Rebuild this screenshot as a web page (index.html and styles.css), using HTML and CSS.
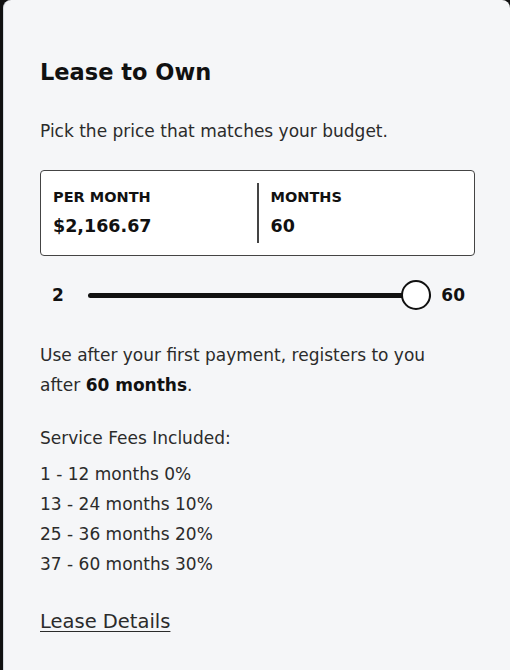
FILE: index.html
```html
<!DOCTYPE html>
<html lang="en">
<head>
  <meta charset="UTF-8" />
  <meta name="viewport" content="width=device-width, initial-scale=1.0"/>
  <title>Lease to Own</title>
  <link rel="stylesheet" href="styles.css">
</head>
<body>
  <section class="lease-card">
    <h2 class="lease-title">Lease to Own</h2>
    <p class="lease-intro">Pick the price that matches your budget.</p>

    <div class="lease-summary">
      <div class="summary-col">
        <div class="summary-label">Per Month</div>
        <div class="summary-value">$2,166.67</div>
      </div>
      <div class="summary-col summary-col-right">
        <div class="summary-label">Months</div>
        <div class="summary-value">60</div>
      </div>
    </div>

    <div class="term-slider">
      <span class="term-min">2</span>
      <div class="term-track">
        <span class="term-thumb"></span>
      </div>
      <span class="term-max">60</span>
    </div>

    <p class="lease-note">Use after your first payment, registers to you after <strong>60 months</strong>.</p>

    <p class="fees-title">Service Fees Included:</p>
    <ul class="fees-list">
      <li>1 - 12 months 0%</li>
      <li>13 - 24 months 10%</li>
      <li>25 - 36 months 20%</li>
      <li>37 - 60 months 30%</li>
    </ul>

    <a href="#" class="lease-link">Lease Details</a>
  </section>
</body>
</html>
```

FILE: styles.css
```css
:root {
  --card-bg: #f5f6f8;
  --ink: #111;
  --text: #2b2b2b;
  --line: #d3d9df;
}

* {
  margin: 0;
  padding: 0;
  box-sizing: border-box;
}

body {
  background: #111;
  font-family: 'DejaVu Sans', 'Noto Sans', sans-serif;
  color: var(--text);
  height: 670px;
  overflow: hidden;
}

.lease-card {
  margin-left: 3px;
  min-height: 700px;
  background: var(--card-bg);
  border-left: 1px solid var(--line);
  border-radius: 8px 8px 0 0;
  padding: 58px 35px 0 36px;
}

.lease-title {
  font-size: 22.5px;
  line-height: 28px;
  font-weight: 600;
  color: var(--ink);
}

.lease-intro {
  margin-top: 33px;
  font-size: 17px;
  line-height: 24px;
}

.lease-summary {
  margin-top: 27px;
  display: flex;
  border: 1px solid #444;
  border-radius: 4px;
  padding: 12px 0;
  background: #fff;
}

.summary-col {
  flex: 1;
  padding: 4px 12px 5px;
}

.summary-col-right {
  border-left: 2px solid #444;
}

.summary-label {
  font-size: 14.5px;
  line-height: 20px;
  font-weight: 600;
  text-transform: uppercase;
  color: var(--ink);
}

.summary-value {
  margin-top: 7px;
  font-size: 17.5px;
  line-height: 24px;
  font-weight: 600;
  color: var(--ink);
}

.term-slider {
  margin-top: 24px;
  height: 30px;
  display: flex;
  align-items: center;
  padding: 0 10px 0 12px;
  font-size: 17px;
  font-weight: 600;
  color: var(--ink);
}

.term-track {
  flex: 1;
  height: 5px;
  margin: 0 10px 0 24px;
  background: #111;
  border-radius: 3px;
  position: relative;
}

.term-thumb {
  position: absolute;
  right: 0;
  top: 50%;
  width: 30px;
  height: 30px;
  margin-top: -15px;
  border: 2px solid #111;
  border-radius: 50%;
  background: #fff;
}

.lease-note {
  margin-top: 30px;
  max-width: 410px;
  font-size: 17px;
  line-height: 30px;
}

.lease-note strong {
  font-weight: 600;
  color: var(--ink);
}

.fees-title {
  margin-top: 23px;
  font-size: 17px;
  line-height: 30px;
}

.fees-list {
  list-style: none;
  margin-top: 6px;
  font-size: 17px;
  line-height: 30px;
}

.lease-link {
  display: inline-block;
  margin-top: 28px;
  font-size: 19.5px;
  line-height: 30px;
  color: var(--text);
  text-decoration: underline;
  text-underline-offset: 3px;
}
```
